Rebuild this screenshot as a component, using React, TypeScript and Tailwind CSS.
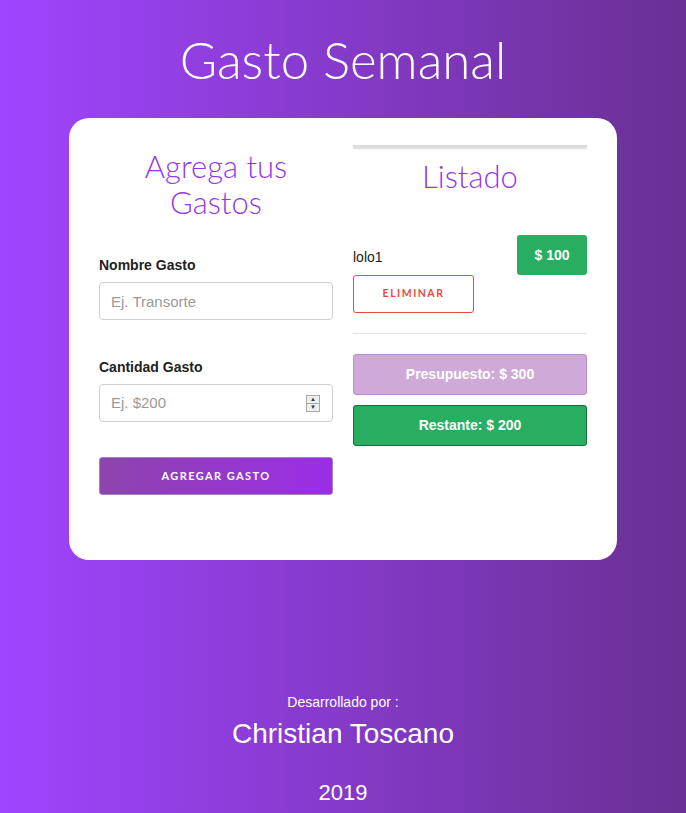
import React from 'react';

const gastos = [{ id: 1, nombre: 'lolo1', cantidad: 100 }];

const Formulario = () => (
  <div className="flex flex-col">
    <h2 className="text-center font-['Lato'] font-light text-[31px] leading-[36px] text-[#9438e6] mt-[30px] px-10">
      Agrega tus Gastos
    </h2>
    <label className="mt-[35px] font-['Liberation_Sans'] font-bold text-[14px] text-[#222]">Nombre Gasto</label>
    <input
      className="mt-[6px] h-[38px] w-full rounded-[4px] border border-[#d1d1d1] px-[11px] font-['Liberation_Sans'] text-[15px] placeholder:text-[#999] outline-none"
      placeholder="Ej. Transorte"
    />
    <label className="mt-[37px] font-['Liberation_Sans'] font-bold text-[14px] text-[#222]">Cantidad Gasto</label>
    <div className="mt-[6px] h-[38px] w-full rounded-[4px] border border-[#d1d1d1] px-[11px] flex items-center justify-between">
      <span className="font-['Liberation_Sans'] text-[15px] text-[#999]">Ej. $200</span>
      <span className="flex flex-col w-[14px] h-[17px] border border-[#aaa] bg-[#eee] mr-[1px]">
        <span className="flex-1 flex items-center justify-center text-[6px] leading-none text-[#333]">▲</span>
        <span className="flex-1 flex items-center justify-center text-[6px] leading-none text-[#333] border-t border-[#aaa]">▼</span>
      </span>
    </div>
    <button className="mt-[35px] h-[38px] w-full rounded-[3px] border border-[#9c87b8] bg-[linear-gradient(to_right,#8e44ad,#9b2de6)] font-['Lato'] font-bold text-[11px] tracking-[1.4px] text-white">
      AGREGAR GASTO
    </button>
  </div>
);

const Listado = () => (
  <div className="flex flex-col">
    <div className="mt-[27px] h-[3px] bg-[#dcdcdc] shadow-[0_1px_2px_rgba(0,0,0,0.15)]" />
    <h2 className="text-center font-['Lato'] font-light text-[31px] leading-[36px] text-[#9438e6] mt-[10px]">Listado</h2>
    <ul className="mt-[41px]">
      {gastos.map((g) => (
        <li key={g.id} className="flex justify-between">
          <div className="flex flex-col">
            <span className="mt-[14px] font-['Liberation_Sans'] text-[14px] text-[#222] leading-[16px]">{g.nombre}</span>
            <button className="mt-[10px] h-[38px] w-[121px] rounded-[3px] border border-[#e74c3c] font-['Lato'] font-bold text-[10.5px] tracking-[1.5px] text-[#e74c3c]">
              ELIMINAR
            </button>
          </div>
          <span className="h-[40px] w-[70px] rounded-[3px] bg-[#27ae60] flex items-center justify-center font-['Liberation_Sans'] font-bold text-[14px] text-white">
            $ {g.cantidad}
          </span>
        </li>
      ))}
    </ul>
    <div className="mt-[20px] h-px bg-[#e3e3e3]" />
    <div className="mt-[20px] h-[41px] rounded-[3px] border border-[#bb8ad4] bg-[#cfaad9] flex items-center justify-center font-['Liberation_Sans'] font-bold text-[14px] text-white">
      Presupuesto: $ 300
    </div>
    <div className="mt-[10px] h-[41px] rounded-[3px] border border-[#1b6b3c] bg-[#27ae60] flex items-center justify-center font-['Liberation_Sans'] font-bold text-[14px] text-white">
      Restante: $ 200
    </div>
  </div>
);

export default function App() {
  return (
    <div className="min-h-screen w-full bg-[linear-gradient(to_right,#a044ff,#6a3093)] flex flex-col items-center">
      <h1 className="mt-[32px] font-['Lato'] font-light text-[51px] leading-[56px] text-white">Gasto Semanal</h1>
      <main className="mt-[30px] w-[548px] h-[442px] rounded-[20px] bg-white p-[30px] pt-0 grid grid-cols-2 gap-[20px]">
        <Formulario />
        <Listado />
      </main>
      <footer className="mt-[134px] flex flex-col items-center text-white font-['Liberation_Sans']">
        <p className="text-[14px] leading-[16px]">Desarrollado por :</p>
        <p className="mt-[8px] text-[28px] leading-[32px]">Christian Toscano</p>
        <p className="mt-[30px] text-[22px] leading-[26px]">2019</p>
      </footer>
    </div>
  );
}
